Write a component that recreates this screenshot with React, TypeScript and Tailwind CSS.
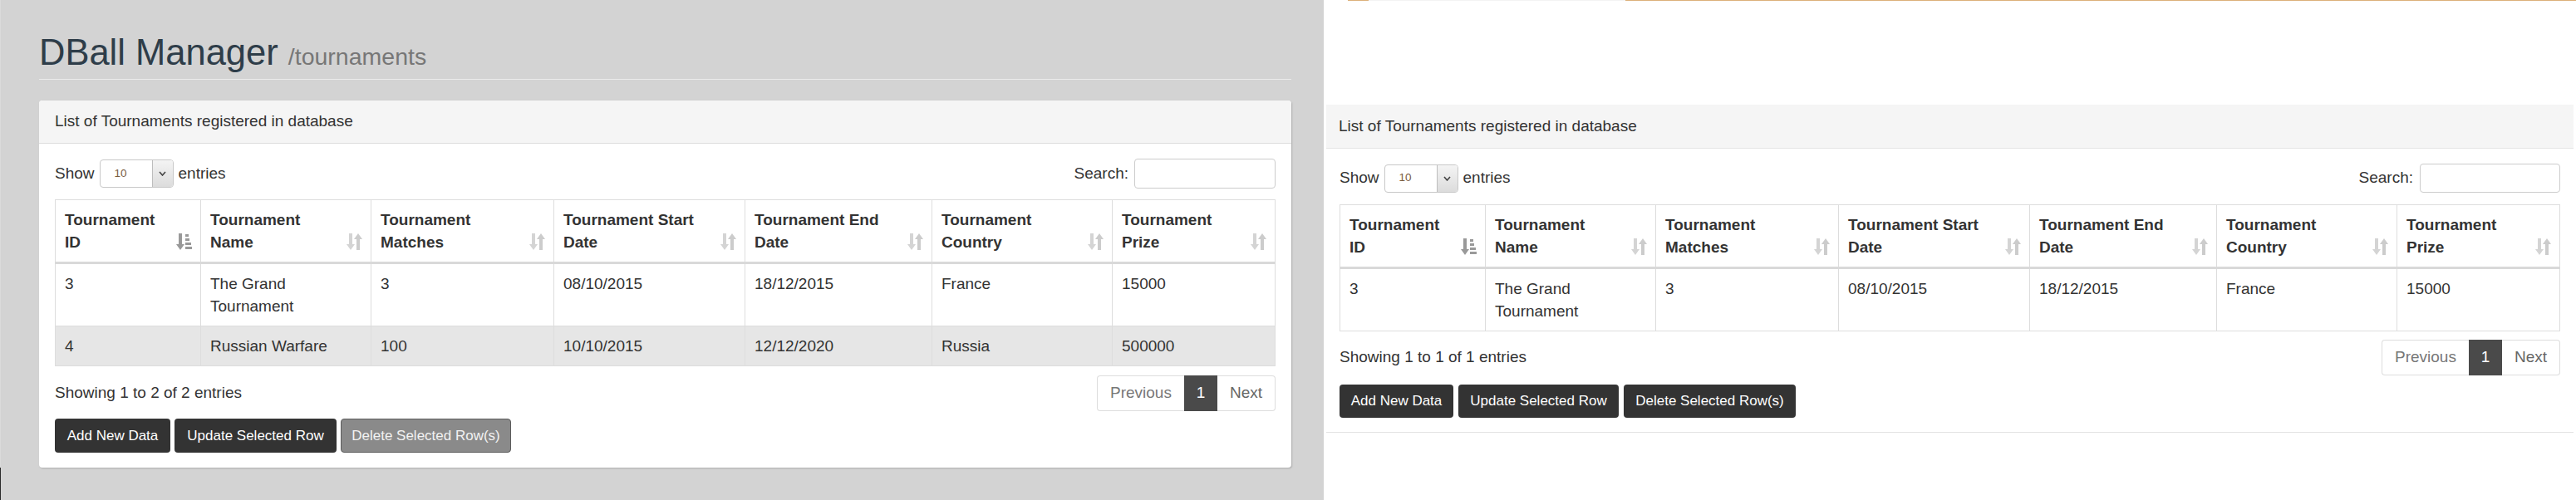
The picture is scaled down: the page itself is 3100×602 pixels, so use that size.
import React from "react";

type Cell = string | number;

const headers = [
  "Tournament ID",
  "Tournament Name",
  "Tournament Matches",
  "Tournament Start Date",
  "Tournament End Date",
  "Tournament Country",
  "Tournament Prize",
];

const colClasses = ["w-[175px]", "w-[205px]", "w-[220px]", "w-[230px]", "w-[225px]", "w-[217px]", "w-[196px]"];

const allRows: Cell[][] = [
  [3, "The Grand Tournament", 3, "08/10/2015", "18/12/2015", "France", 15000],
  [4, "Russian Warfare", 100, "10/10/2015", "12/12/2020", "Russia", 500000],
];

const SortIcon = ({ active }: { active?: boolean }) => {
  if (active) {
    return (
      <svg width="19" height="20" viewBox="0 0 19 20" className="shrink-0 mb-[4px]">
        <rect x="3" y="0" width="4" height="14" fill="#999" />
        <polygon points="0,13 10,13 5,20" fill="#999" />
        <rect x="11" y="1" width="4" height="3" fill="#999" />
        <rect x="11" y="6" width="5" height="3" fill="#999" />
        <rect x="11" y="11" width="7" height="3" fill="#999" />
        <rect x="11" y="16" width="8" height="3" fill="#999" />
      </svg>
    );
  }
  return (
    <svg width="19" height="20" viewBox="0 0 19 20" className="shrink-0 mb-[4px]">
      <rect x="3" y="0" width="4" height="14" fill="#d4d4d4" />
      <polygon points="0,13 10,13 5,20" fill="#d4d4d4" />
      <polygon points="9,7 19,7 14,0" fill="#cccccc" />
      <rect x="12" y="6" width="4" height="14" fill="#cccccc" />
    </svg>
  );
};

const PageSelect = () => (
  <div className="h-[34px] w-[89px] border border-[#c8c8c8] rounded-[4px] flex overflow-hidden bg-white mx-[6px]">
    <div className="flex-1 pl-[17px] text-[13.5px] text-[#7a5c3e] flex items-center">10</div>
    <div className="w-[25px] border-l border-[#bdbdbd] bg-gradient-to-b from-[#f4f4f4] to-[#dcdcdc] flex items-center justify-center">
      <svg width="9" height="6" viewBox="0 0 9 6">
        <polyline points="1,1 4.5,5 8,1" fill="none" stroke="#444" strokeWidth="1.6" />
      </svg>
    </div>
  </div>
);

const Pager = () => (
  <div className="flex h-[43px] text-[19px]">
    <div className="px-[15px] flex items-center border border-[#dddddd] border-r-0 rounded-l-[4px] text-[#777]">Previous</div>
    <div className="w-[40px] flex items-center justify-center bg-[#4a4a4a] text-white">1</div>
    <div className="px-[15px] flex items-center border border-[#dddddd] border-l-0 rounded-r-[4px] text-[#666]">Next</div>
  </div>
);

const DataTable = ({ rows, selected }: { rows: Cell[][]; selected?: number }) => (
  <table className="table-fixed border-collapse w-[1468px] text-[19px] leading-[27px] text-[#333]">
    <colgroup>
      {colClasses.map((c, i) => (
        <col key={i} className={c} />
      ))}
    </colgroup>
    <thead>
      <tr>
        {headers.map((h, i) => (
          <th key={h} className="border border-[#dddddd] border-b-[3px] border-b-[#d9d9d9] pl-[11px] pr-[10px] py-[10px] text-left font-bold align-bottom">
            <div className="flex items-end justify-between gap-[10px]">
              <span>{h}</span>
              <SortIcon active={i === 0} />
            </div>
          </th>
        ))}
      </tr>
    </thead>
    <tbody>
      {rows.map((r, ri) => (
        <tr key={ri} className={ri === selected ? "bg-[#e6e6e6]" : "bg-white"}>
          {r.map((c, ci) => (
            <td key={ci} className="border border-[#dddddd] px-[11px] py-[10px] align-top">
              {c}
            </td>
          ))}
        </tr>
      ))}
    </tbody>
  </table>
);

const LeftPanel = () => (
  <div className="mt-[25px] rounded-[4px] bg-white shadow-[1px_1px_2px_rgba(0,0,0,0.18)]">
    <div className="h-[52px] px-[19px] flex items-center bg-[#f5f5f5] border-b border-[#dddddd] rounded-t-[4px] text-[19px] text-[#333]">
      List of Tournaments registered in database
    </div>
    <div className="px-[19px] pt-[18px] pb-[18px]">
      <div className="h-[36px] flex items-center justify-between text-[19px] text-[#333]">
        <div className="flex items-center">
          <span>Show</span>
          <PageSelect />
          <span>entries</span>
        </div>
        <label className="flex items-center">
          Search:
          <input type="text" className="ml-[7px] h-[36px] w-[170px] border border-[#cccccc] rounded-[4px] bg-white" />
        </label>
      </div>
      <div className="mt-[13px]">
        <DataTable rows={allRows} selected={1} />
      </div>
      <div className="mt-[11px] flex items-center justify-between">
        <span className="text-[19px] text-[#333]">Showing 1 to 2 of 2 entries</span>
        <Pager />
      </div>
      <div className="mt-[9px] flex gap-[5px] text-[17px]">
        <button className="h-[41px] w-[139px] rounded-[4px] bg-[#333333] text-white">Add New Data</button>
        <button className="h-[41px] w-[195px] rounded-[4px] bg-[#333333] text-white">Update Selected Row</button>
        <button className="h-[41px] w-[205px] rounded-[4px] bg-[#8a8a8a] border border-[#5c5c5c] text-[#f2f2f2]">
          Delete Selected Row(s)
        </button>
      </div>
    </div>
  </div>
);

const RightPanel = () => (
  <div className="mt-[125px] ml-[3px] mr-[5px] bg-white border-b border-[#e3e3e3]">
    <div className="h-[53px] px-[15px] flex items-center bg-[#f5f5f5] border-b border-[#e5e5e5] text-[19px] text-[#333]">
      List of Tournaments registered in database
    </div>
    <div className="px-[16px] pt-[18px] pb-[17px]">
      <div className="h-[35px] flex items-center justify-between text-[19px] text-[#333]">
        <div className="flex items-center">
          <span>Show</span>
          <PageSelect />
          <span>entries</span>
        </div>
        <label className="flex items-center">
          Search:
          <input type="text" className="ml-[8px] h-[35px] w-[169px] border border-[#cccccc] rounded-[4px] bg-white" />
        </label>
      </div>
      <div className="mt-[14px]">
        <DataTable rows={allRows.slice(0, 1)} />
      </div>
      <div className="mt-[10px] flex items-center justify-between">
        <span className="text-[19px] text-[#333]">Showing 1 to 1 of 1 entries</span>
        <Pager />
      </div>
      <div className="mt-[11px] flex gap-[6px] text-[17px]">
        <button className="h-[40px] w-[137px] rounded-[4px] bg-[#333333] text-white">Add New Data</button>
        <button className="h-[40px] w-[193px] rounded-[4px] bg-[#333333] text-white">Update Selected Row</button>
        <button className="h-[40px] w-[207px] rounded-[4px] bg-[#333333] text-white">Delete Selected Row(s)</button>
      </div>
    </div>
  </div>
);

const App = () => {
  return (
    <div className="w-[3100px] h-[602px] flex overflow-hidden font-['Liberation_Sans',Arial,sans-serif]">
      {/* left: grey backdrop page */}
      <div className="w-[1593px] h-full bg-[#d3d3d3] flex">
        <div className="w-[3px] h-full flex flex-col">
          <div className="flex-1 bg-[#dadada]" />
          <div className="h-[39px] bg-[#2a2a2a]" />
        </div>
        <div className="flex-1 pl-[46px] pr-[39px] pt-[40px]">
          <h1 className="h-[56px] pb-[10px] border-b border-[#ececec] text-[43.5px] leading-[46px] font-normal text-[#2e3d49] whitespace-nowrap">
            DBall Manager <small className="text-[28.5px] leading-none text-[#777]">/tournaments</small>
          </h1>
          <LeftPanel />
        </div>
      </div>

      {/* right: plain page */}
      <div className="flex-1 h-full bg-white flex flex-col">
        <div className="h-[1px] flex">
          <div className="w-[29px]" />
          <div className="w-[25px] bg-[#dcb07a]" />
          <div className="w-[309px] bg-[#f3f3f3]" />
          <div className="flex-1 bg-[#dcb07a]" />
        </div>
        <RightPanel />
      </div>
    </div>
  );
};

export default App;
